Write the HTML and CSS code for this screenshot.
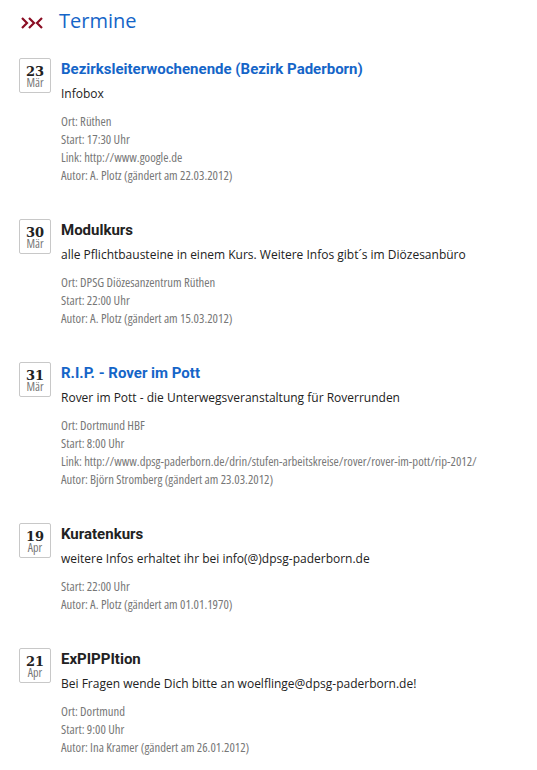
FILE: index.html
```html
<!DOCTYPE html>
<html lang="de">
<head>
<meta charset="utf-8">
<link rel="stylesheet" href="styles.css">
</head>
<body>
<div class="page">
  <h2 class="heading">
    <svg class="heading-icon" width="22" height="14" viewBox="0 0 22 14">
      <path d="M1 2 L6 7 L1 12" fill="none" stroke="#8b0e24" stroke-width="2.2"/>
      <path d="M8 2 L13 7 L8 12" fill="none" stroke="#8b0e24" stroke-width="2.2"/>
      <path d="M21 2 L16 7 L21 12" fill="none" stroke="#8b0e24" stroke-width="2.2"/>
    </svg>
    <span>Termine</span>
  </h2>

  <div class="events">
    <div class="event">
      <div class="date"><span class="day">23</span><span class="month">Mär</span></div>
      <div class="body">
        <a class="title link" href="#">Bezirksleiterwochenende (Bezirk Paderborn)</a>
        <p class="desc">Infobox</p>
        <div class="meta">
          <div>Ort: Rüthen</div>
          <div>Start: 17:30 Uhr</div>
          <div>Link: http://www.google.de</div>
          <div>Autor: A. Plotz (gändert am 22.03.2012)</div>
        </div>
      </div>
    </div>

    <div class="event">
      <div class="date"><span class="day">30</span><span class="month">Mär</span></div>
      <div class="body">
        <span class="title">Modulkurs</span>
        <p class="desc">alle Pflichtbausteine in einem Kurs. Weitere Infos gibt´s im Diözesanbüro</p>
        <div class="meta">
          <div>Ort: DPSG Diözesanzentrum Rüthen</div>
          <div>Start: 22:00 Uhr</div>
          <div>Autor: A. Plotz (gändert am 15.03.2012)</div>
        </div>
      </div>
    </div>

    <div class="event">
      <div class="date"><span class="day">31</span><span class="month">Mär</span></div>
      <div class="body">
        <a class="title link" href="#">R.I.P. - Rover im Pott</a>
        <p class="desc">Rover im Pott - die Unterwegsveranstaltung für Roverrunden</p>
        <div class="meta">
          <div>Ort: Dortmund HBF</div>
          <div>Start: 8:00 Uhr</div>
          <div>Link: http://www.dpsg-paderborn.de/drin/stufen-arbeitskreise/rover/rover-im-pott/rip-2012/</div>
          <div>Autor: Björn Stromberg (gändert am 23.03.2012)</div>
        </div>
      </div>
    </div>

    <div class="event">
      <div class="date"><span class="day">19</span><span class="month">Apr</span></div>
      <div class="body">
        <span class="title">Kuratenkurs</span>
        <p class="desc">weitere Infos erhaltet ihr bei info(@)dpsg-paderborn.de</p>
        <div class="meta">
          <div>Start: 22:00 Uhr</div>
          <div>Autor: A. Plotz (gändert am 01.01.1970)</div>
        </div>
      </div>
    </div>

    <div class="event">
      <div class="date"><span class="day">21</span><span class="month">Apr</span></div>
      <div class="body">
        <span class="title">ExPIPPItion</span>
        <p class="desc">Bei Fragen wende Dich bitte an woelflinge@dpsg-paderborn.de!</p>
        <div class="meta">
          <div>Ort: Dortmund</div>
          <div>Start: 9:00 Uhr</div>
          <div>Autor: Ina Kramer (gändert am 26.01.2012)</div>
        </div>
      </div>
    </div>
  </div>
</div>
</body>
</html>
```

FILE: styles.css
```css
* { box-sizing: border-box; }
html, body { margin: 0; padding: 0; background: #fff; }
body { font-family: "Open Sans", "Noto Sans", sans-serif; color: #222; }

.page { padding: 9px 0 0 19px; }

.heading {
  display: flex;
  align-items: center;
  margin: 0;
  height: 24px;
  font-weight: normal;
  font-size: 20px;
  line-height: 24px;
  color: #1565c8;
  font-family: "Open Sans", "Noto Sans", sans-serif;
}
.heading-icon { margin: 4px 16px 0 2px; }

.events {
  display: flex;
  flex-direction: column;
  gap: 35px;
  margin-top: 25px;
}

.event { display: flex; gap: 10px; align-items: flex-start; }

.date {
  flex: none;
  width: 32px;
  height: 35px;
  border: 1px solid #c8c8c8;
  border-radius: 2px;
  display: flex;
  flex-direction: column;
  align-items: center;
  padding-top: 7px;
}
.day {
  font-family: "DejaVu Serif", serif;
  font-weight: bold;
  font-size: 13px;
  line-height: 12px;
  color: #222;
}
.month {
  font-family: "Open Sans", sans-serif;
  font-stretch: 75%;
  font-size: 12px;
  line-height: 10px;
  color: #777;
}

.body { display: flex; flex-direction: column; }

.title {
  font-family: "Roboto", sans-serif;
  font-weight: bold;
  font-size: 15px;
  line-height: 22px;
  color: #222;
  text-decoration: none;
}
.title.link { color: #1565c8; }

.desc {
  margin: 4px 0 0;
  font-size: 12px;
  line-height: 20px;
  color: #222;
}

.meta {
  margin-top: 8px;
  font-family: "Open Sans", sans-serif;
  font-stretch: 75%;
  font-size: 12.7px;
  line-height: 18px;
  color: #777;
}
```
